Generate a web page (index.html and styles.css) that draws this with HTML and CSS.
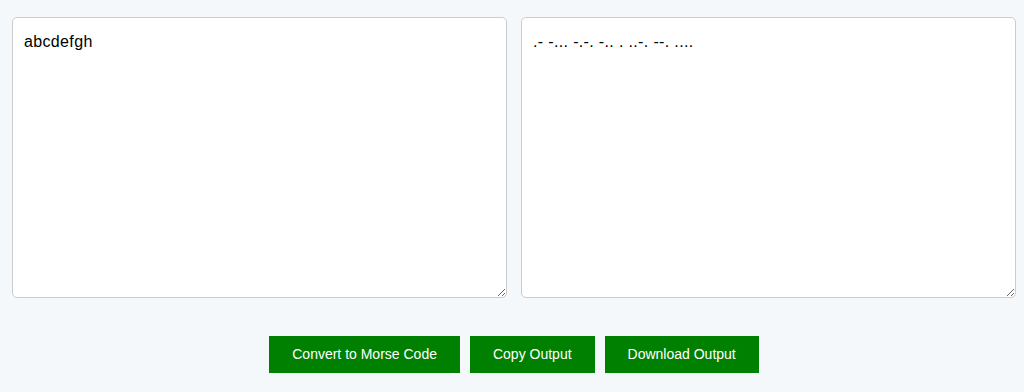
FILE: index.html
```html
<!DOCTYPE html>
<html lang="en">
<head>
    <meta charset="UTF-8">
    <meta name="viewport" content="width=device-width, initial-scale=1.0">
    <title>Text to Morse Code</title>
    <link rel="stylesheet" href="styles.css">
</head>
<body>
    <div class="converter">
        <div class="panes">
            <textarea id="input" class="pane" spellcheck="true">abcdefgh</textarea>
            <textarea id="output" class="pane" readonly>.- -... -.-. -.. . ..-. --. ....</textarea>
        </div>
        <div class="actions">
            <button class="btn">Convert to Morse Code</button>
            <button class="btn">Copy Output</button>
            <button class="btn">Download Output</button>
        </div>
    </div>
</body>
</html>
```

FILE: styles.css
```css
:root {
    --bg-color: #f4f8fb;
    --btn-color: #008000;
    --border-color: #cccccc;
}

body {
    margin: 0;
    background-color: var(--bg-color);
    font-family: 'Liberation Sans', Arial, sans-serif;
}

.converter {
    padding: 17px 8px 0 12px;
}

.panes {
    display: grid;
    grid-template-columns: 1fr 1fr;
    gap: 14px;
}

.pane {
    box-sizing: border-box;
    width: 100%;
    height: 281px;
    margin: 0;
    padding: 15px 11px 12px;
    border: 1px solid var(--border-color);
    border-radius: 5px;
    background: #fff;
    color: #000;
    font-family: 'Liberation Sans', Arial, sans-serif;
    font-size: 16px;
    line-height: 18px;
    letter-spacing: 0.35px;
    resize: both;
    outline: none;
}

.actions {
    display: flex;
    justify-content: center;
    gap: 10px;
    margin-top: 38px;
}

.btn {
    padding: 10px 23px;
    border: none;
    border-radius: 0;
    background-color: var(--btn-color);
    color: #fff;
    font-family: 'Liberation Sans', Arial, sans-serif;
    font-size: 14px;
    line-height: 17px;
    cursor: pointer;
}
```
